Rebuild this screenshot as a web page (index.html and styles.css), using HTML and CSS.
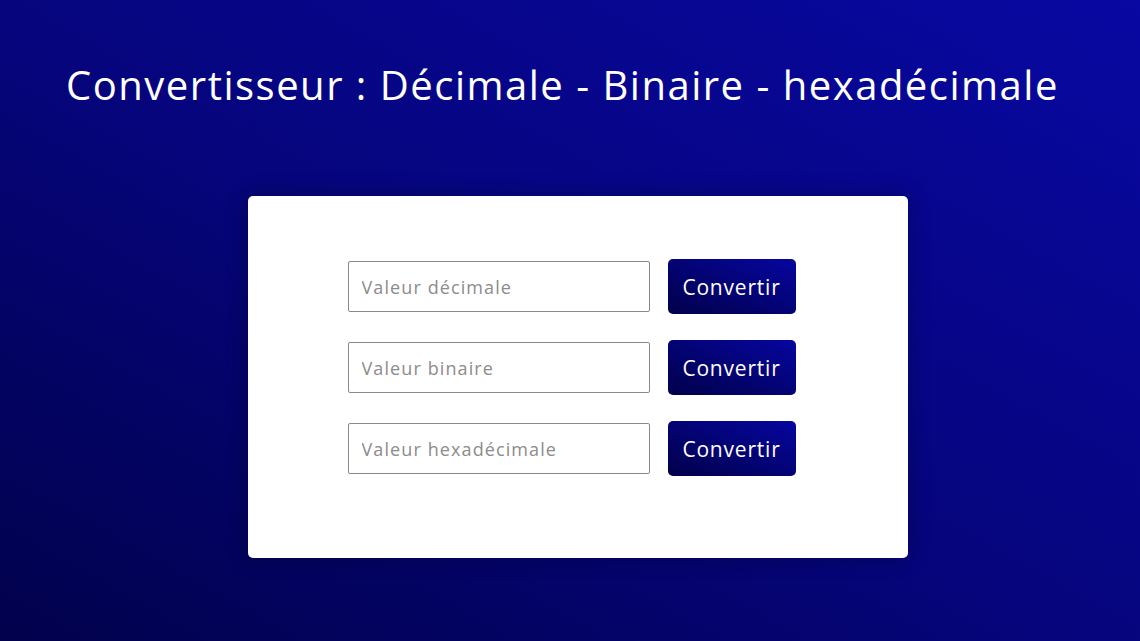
FILE: index.html
```html
<!DOCTYPE html>
<html lang="fr">
<head>
<meta charset="utf-8">
<title>Convertisseur</title>
<link rel="stylesheet" href="styles.css">
</head>
<body>
<main class="page">
  <h1 class="title">Convertisseur : Décimale - Binaire - hexadécimale</h1>
  <section class="card">
    <form class="row">
      <input class="field" type="text" placeholder="Valeur décimale">
      <button class="btn" type="button">Convertir</button>
    </form>
    <form class="row">
      <input class="field" type="text" placeholder="Valeur binaire">
      <button class="btn" type="button">Convertir</button>
    </form>
    <form class="row">
      <input class="field" type="text" placeholder="Valeur hexadécimale">
      <button class="btn" type="button">Convertir</button>
    </form>
  </section>
</main>
</body>
</html>
```

FILE: styles.css
```css
* { box-sizing: border-box; }
html, body { margin: 0; height: 100%; }
body {
  font-family: "Open Sans", "Noto Sans", sans-serif;
  background: linear-gradient(to top right, #01014c 0%, #06057e 50%, #0808a2 100%);
  color: #fff;
  overflow: hidden;
}
.page {
  height: 641px;
  display: flex;
  flex-direction: column;
  align-items: center;
}
.title {
  margin: 61px 0 0 -15px;
  font-size: 40px;
  font-weight: 500;
  line-height: 48px;
  letter-spacing: 1.5px;
  white-space: nowrap;
}
.card {
  margin: 87px 0 0 15px;
  width: 660px;
  height: 362px;
  background: #fff;
  border-radius: 5px;
  box-shadow: 0 0 20px rgba(0, 0, 30, 0.35);
  padding: 63px 0 0 100px;
  display: flex;
  flex-direction: column;
  gap: 26px;
}
.row {
  margin: 0;
  display: flex;
  align-items: center;
  gap: 18px;
}
.field {
  width: 302px;
  height: 51px;
  border: 1px solid #8a8a8a;
  border-radius: 2px;
  padding: 0 13px;
  font-family: inherit;
  font-size: 18px;
  letter-spacing: 1.1px;
  color: #333;
  outline: none;
}
.field::placeholder { color: #8c8c8c; }
.btn {
  width: 128px;
  height: 55px;
  border: none;
  border-radius: 5px;
  background: linear-gradient(to top right, #01004a 0%, #0606a0 100%);
  color: #fff;
  font-family: inherit;
  font-size: 21px;
  letter-spacing: 0.8px;
  padding: 0;
  cursor: pointer;
}
```
